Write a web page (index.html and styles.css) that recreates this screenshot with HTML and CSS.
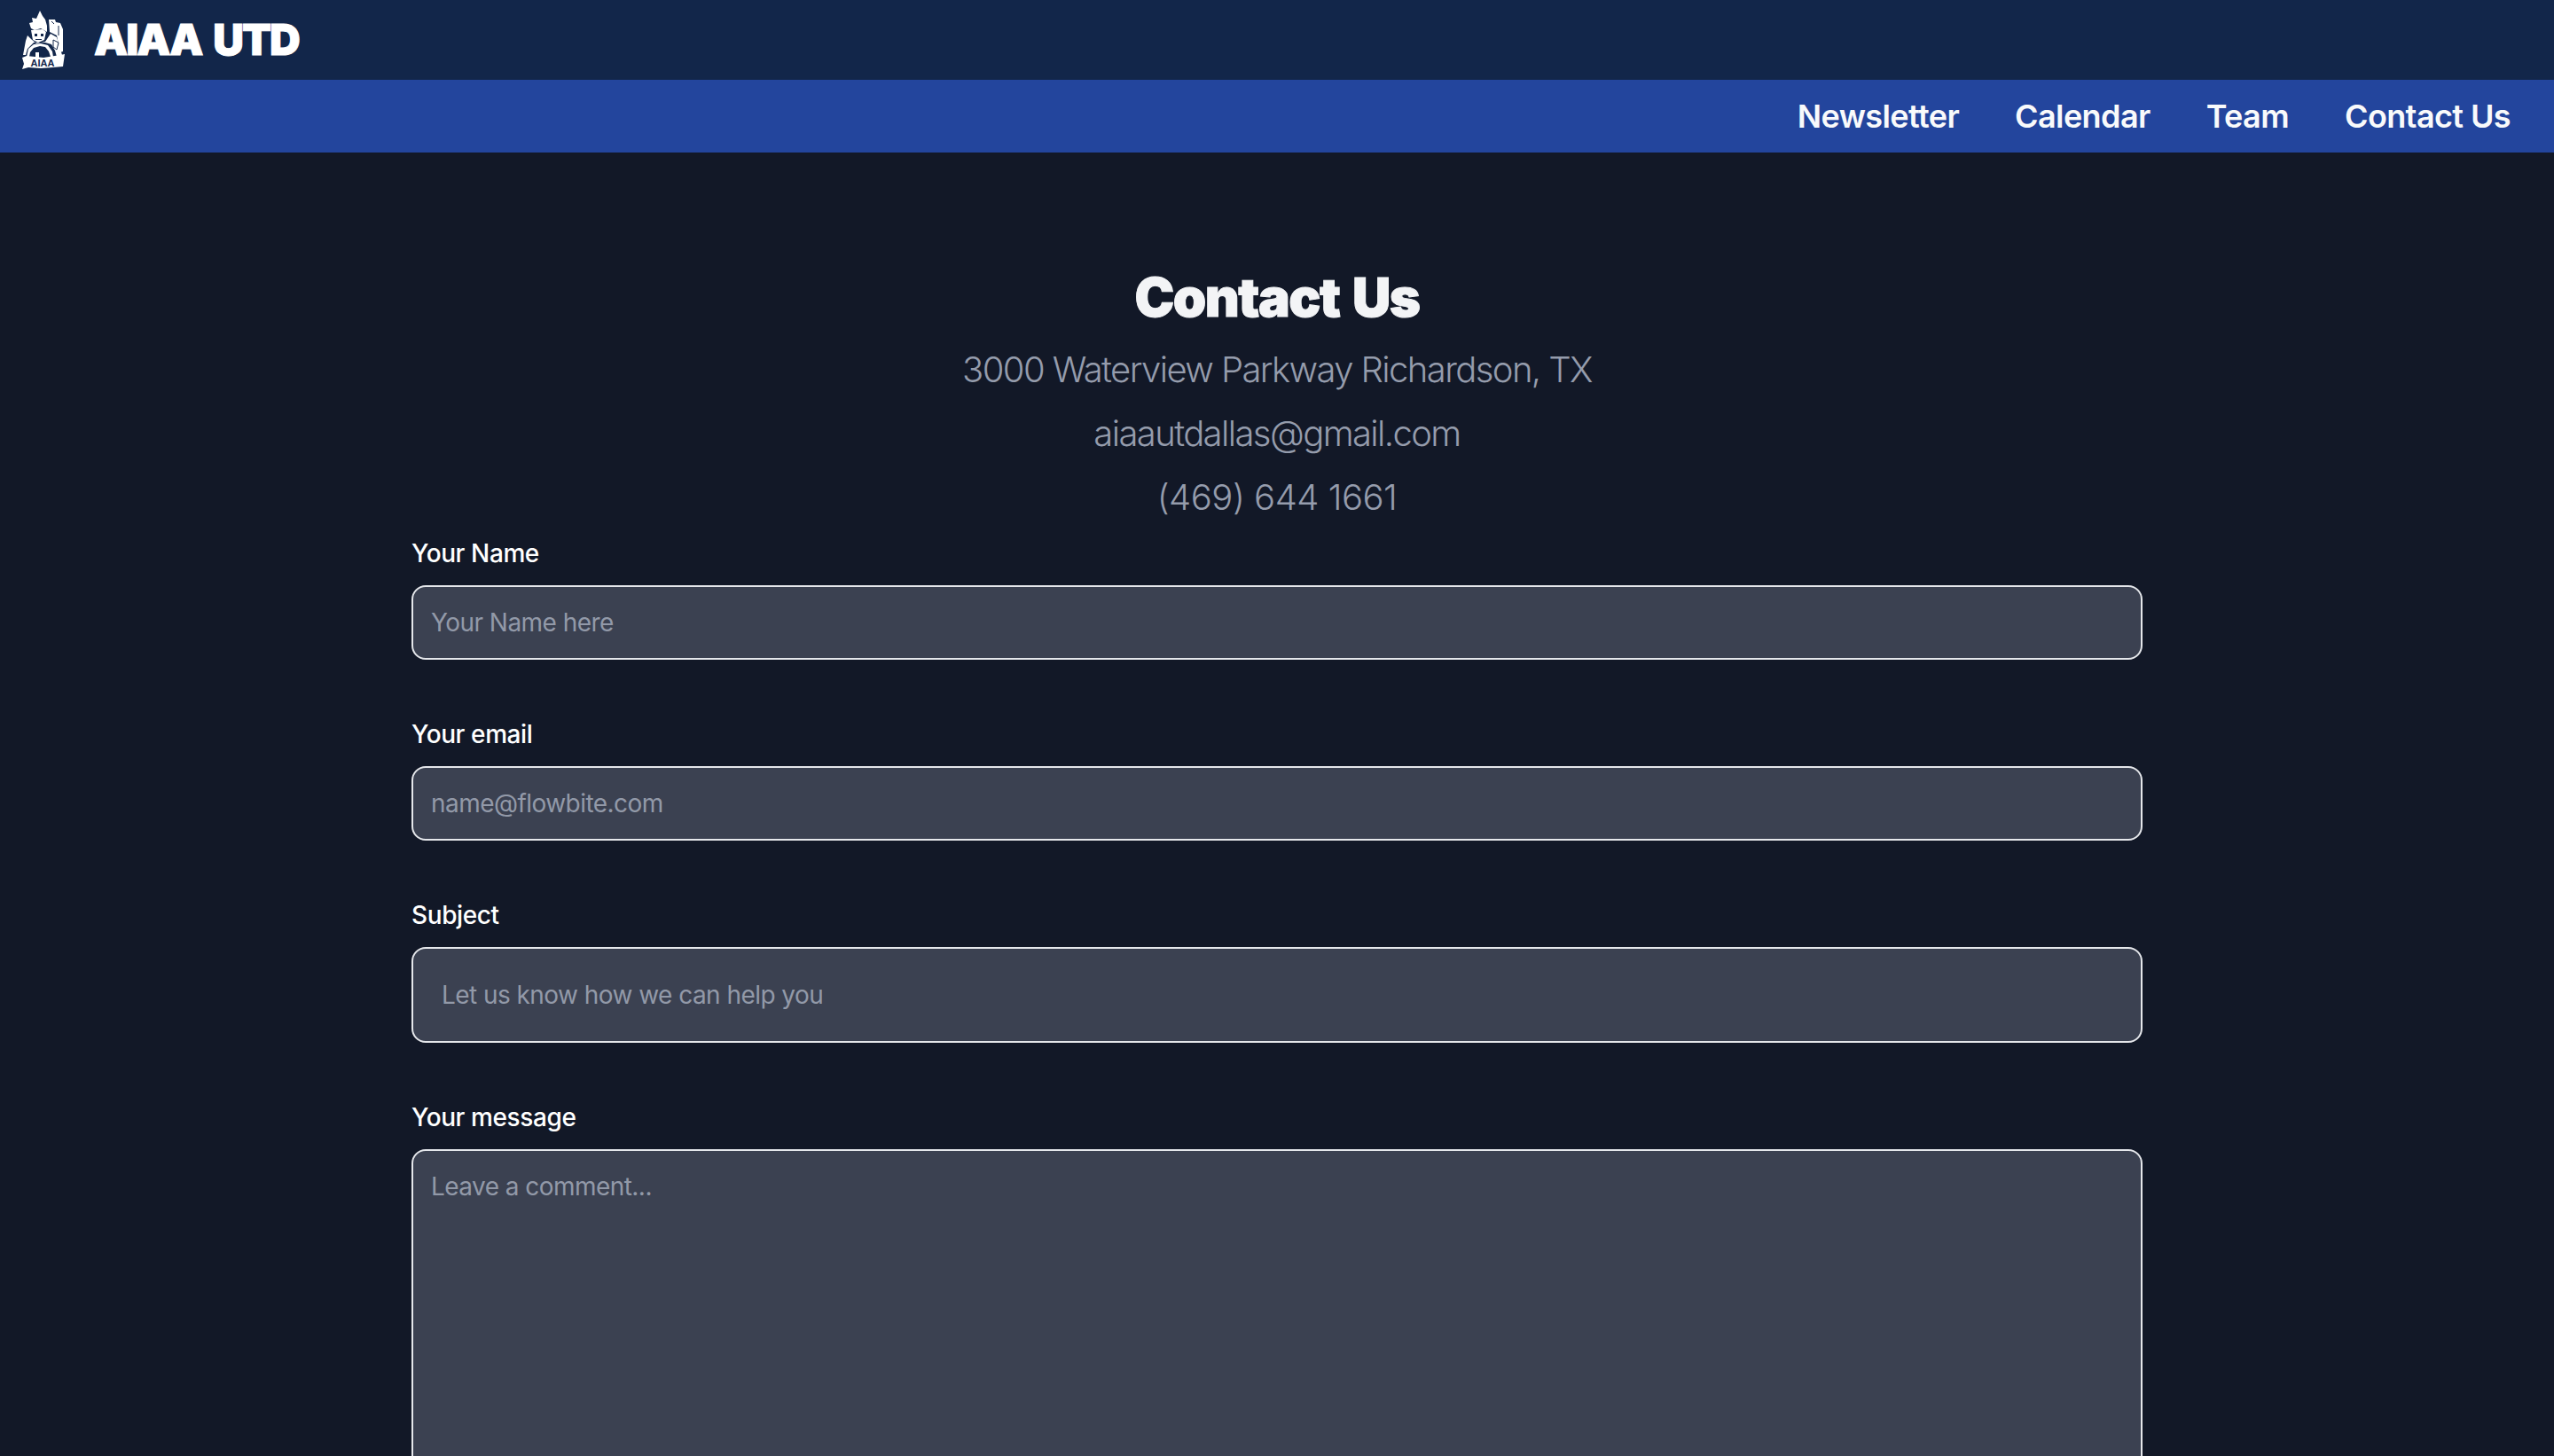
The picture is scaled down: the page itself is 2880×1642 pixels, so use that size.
FILE: index.html
```html
<!DOCTYPE html>
<html lang="en">
<head>
  <meta charset="UTF-8">
  <meta name="viewport" content="width=device-width, initial-scale=1.0">
  <title>Contact Us</title>
  <link rel="stylesheet" href="styles.css">
</head>
<body>
  <header class="topbar">
    <svg class="logo" viewBox="0 0 50 66" aria-hidden="true">
      <!-- hair -->
      <path fill="#fff" d="M11 20 L9 14 L13 13 L12 8 L17 9 L21 0 L24 6 L27 10 L29 17 L29 24 L22 20 L15 22 Z"/>
      <!-- pack -->
      <path fill="#fff" d="M31 10 L38 10 L39 13 L44 14 L47 21 L47 46 L44 47 L40 28 L32 24 Z"/>
      <path fill="none" stroke="#13264a" stroke-width="1" d="M34 12 L37 15 M42 17 L42 28"/>
      <!-- face -->
      <path fill="#fff" d="M11 22 L24 21 L28 24 L26 33 L19 36 L13 33 Z"/>
      <path fill="#13264a" d="M15 26 h3 v3 h-3 Z M22 26 h3 v3 h-3 Z M16 32 h7 v1 h-7 Z"/>
      <!-- suit and helmet arch -->
      <path fill="#fff" d="M7 28 L11 32 L17 37 L27 35 L33 26 L40 30 L46 50 L40 52 L38 45 L34 38 L27 36 L14 36 L7 43 L5 50 L2 50 L5 34 Z"/>
      <path fill="#fff" d="M6 52 L8 43 L14 38 L22 37 L30 39 L35 46 L36 52 L33 52 L31 46 L27 41 L21 40 L14 42 L10 47 L9 52 Z"/>
      <path fill="#fff" d="M16 47 h4 v6 h-4 Z"/>
      <path fill="none" stroke="#13264a" stroke-width="1" d="M36 33 L42 36 L40 44 L36 41 Z"/>
      <!-- banner -->
      <path fill="#fff" d="M1 53 L6 51 L25 53 L44 50 L49 49 L47 63 L36 64 L22 65 L8 64 L1 66 L3 60 Z"/>
      <text class="logo-text" x="24" y="63" text-anchor="middle">AIAA</text>
    </svg>
    <span class="brand">AIAA UTD</span>
  </header>

  <nav class="navbar">
    <a href="#">Newsletter</a>
    <a href="#">Calendar</a>
    <a href="#">Team</a>
    <a href="#">Contact Us</a>
  </nav>

  <main class="container">
    <h2>Contact Us</h2>
    <p class="info">3000 Waterview Parkway Richardson, TX</p>
    <p class="info">aiaautdallas@gmail.com</p>
    <p class="info phone">(469) 644 1661</p>

    <form class="contact-form">
      <div class="field">
        <label for="name">Your Name</label>
        <input type="text" id="name" placeholder="Your Name here">
      </div>
      <div class="field">
        <label for="email">Your email</label>
        <input type="email" id="email" placeholder="name@flowbite.com">
      </div>
      <div class="field">
        <label for="subject">Subject</label>
        <input type="text" id="subject" class="subject" placeholder="Let us know how we can help you">
      </div>
      <div class="field">
        <label for="message">Your message</label>
        <textarea id="message" placeholder="Leave a comment..."></textarea>
      </div>
    </form>
  </main>
</body>
</html>
```

FILE: styles.css
```css
html, body {
  height: 100%;
  overflow: hidden;
}
body {
  font-family: Inter, "Liberation Sans", sans-serif;
  background: #121827;
  color: #fff;
  margin: 0;
}
.topbar {
  display: flex;
  align-items: center;
  height: 90px;
  padding-left: 24px;
  background: #12264a;
  box-sizing: border-box;
}
.logo {
  width: 50px;
  height: 66px;
  margin-right: 32px;
}
.logo-text {
  font-family: "Liberation Sans", sans-serif;
  font-size: 11px;
  font-weight: 700;
  fill: #13264a;
}
.brand {
  font-size: 48px;
  font-weight: 900;
  line-height: 1;
  letter-spacing: -1.9px;
  word-spacing: 5px;
  -webkit-text-stroke: 1px #fff;
}
.navbar {
  display: flex;
  justify-content: flex-end;
  align-items: center;
  gap: 63px;
  height: 82px;
  padding-right: 49px;
  background: #23459d;
}
.navbar a {
  color: #f9fafb;
  font-size: 36px;
  font-weight: 600;
  letter-spacing: -0.6px;
  text-decoration: none;
}
.container {
  width: 1952px;
  margin: 0 auto;
  padding-top: 123px;
}
h2 {
  margin: 0 0 14px;
  font-size: 60px;
  font-weight: 900;
  line-height: 80px;
  letter-spacing: -1.5px;
  word-spacing: 4px;
  text-align: center;
  color: #f3f4f6;
  -webkit-text-stroke: 1px #f3f4f6;
}
.info {
  margin: 0 0 16px;
  font-size: 40px;
  font-weight: 300;
  line-height: 56px;
  letter-spacing: -1.6px;
  text-align: center;
  color: #959cac;
}
.info.phone {
  margin-bottom: 15px;
  letter-spacing: -0.5px;
}
.contact-form {
  display: flex;
  flex-direction: column;
  gap: 64px;
}
label {
  display: block;
  margin-bottom: 16px;
  font-size: 28px;
  font-weight: 500;
  line-height: 40px;
  letter-spacing: -0.4px;
}
input, textarea {
  display: block;
  width: 100%;
  box-sizing: border-box;
  background: #3b4151;
  border: 2px solid #e5e7eb;
  border-radius: 16px;
  color: #fff;
  font-family: inherit;
  font-size: 28px;
  line-height: 40px;
  letter-spacing: -0.55px;
  outline: none;
}
input {
  height: 84px;
  padding: 0 20px;
}
input.subject {
  height: 108px;
  padding: 0 32px;
}
textarea {
  height: 600px;
  padding: 20px;
  resize: none;
}
input::placeholder, textarea::placeholder {
  color: #9299a8;
  opacity: 1;
}
```
